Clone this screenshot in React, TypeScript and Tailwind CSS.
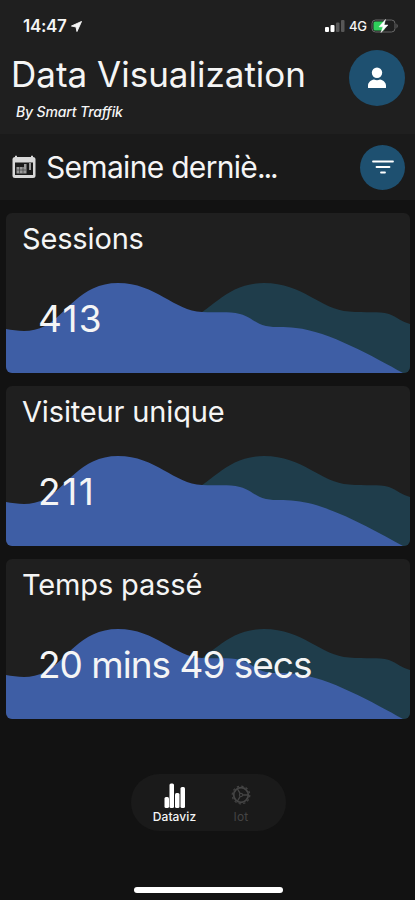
const stats = [
    { title: 'Sessions', value: '413', tracking: 'tracking-[1.2px]' },
    { title: 'Visiteur unique', value: '211', tracking: 'tracking-[1.6px]' },
    { title: 'Temps passé', value: '20 mins 49 secs', tracking: 'tracking-[-1px]' },
];

function Waves() {
    return (
        <svg viewBox="0 0 404 160" preserveAspectRatio="none" className="absolute inset-0 w-full h-full">
            <path fill="#1f3d4b" d="M180 108C206 98 220 70 258 70C297 70 315 97 343 98.500C360 100 372 98 383 101C391 104 396 109 404 111V160H180Z" />
            <path fill="#3e5ea5" d="M0 116C12 118 26 120 39 113C60 102 74 70 112 70C150 70 168 98 196 99C210 100 222 98 234 101C246 104 249 111 260 113C270 115 277 113 290 115C322 118 368 144 397 160H0Z" />
        </svg>
    );
}

function StatCard({ title, value, tracking }: { title: string; value: string; tracking: string }) {
    return (
        <article className="relative h-[160px] rounded-md overflow-hidden bg-[#1f1f1f]">
            <Waves />
            <div className="relative flex flex-col">
                <h2 className="pl-4 pt-2 text-[29px] leading-9 tracking-[-0.15px]">{title}</h2>
                <p className={`pl-[32px] pt-[38px] text-[37px] leading-[48px] ${tracking}`}>{value}</p>
            </div>
        </article>
    );
}

function StatusBar() {
    return (
        <div className="h-[50px] flex items-start justify-between pl-[23px] pr-4">
            <div className="flex items-center gap-1 pt-[15px]">
                <span className="text-[17px] leading-[22px] font-semibold tracking-[-0.3px]">14:47</span>
                <svg viewBox="0 0 12 12" className="size-[11px]" fill="currentColor">
                    <path d="M11.500 0.500L0.500 5.500L5.500 6.500L6.500 11.500Z" stroke="currentColor" strokeLinejoin="round" />
                </svg>
            </div>
            <div className="flex items-center pt-[15px]">
                <svg viewBox="0 0 20 12" className="w-5 h-3" fill="white">
                    <rect x="0" y="7" width="4" height="5" rx="1" />
                    <rect x="5.500" y="5" width="4" height="7" rx="1" />
                    <rect x="11" y="2.500" width="3.500" height="9.500" rx="1" opacity="0.250" />
                    <rect x="16" y="0" width="3.500" height="12" rx="1" opacity="0.250" />
                </svg>
                <span className="ml-1 text-[13px] leading-[22px] font-medium tracking-[-0.1px]">4G</span>
                <svg viewBox="0 0 28 14" className="ml-1 w-7 h-3.5">
                    <rect x="1" y="1" width="23" height="12" rx="3.500" fill="none" stroke="#686868" />
                    <rect x="2.500" y="2.500" width="11" height="9" rx="1.500" fill="#2fd05b" />
                    <path d="M25.500 4.500Q28 7 25.500 9.500Z" fill="#686868" />
                    <path d="M14.500 0.500L8 7.800H12L10 13.500L17 6H13Z" fill="white" stroke="white" strokeWidth="0.500" />
                </svg>
            </div>
        </div>
    );
}

export default function App() {
    return (
        <main className="w-full h-[900px] flex flex-col bg-[#121212] text-[#f5f5f5] font-['Inter','Liberation_Sans',sans-serif] overflow-hidden">
            <header className="h-[134px] bg-[#1f1f1f]">
                <StatusBar />
                <div className="flex justify-between pl-[11px] pr-[10px]">
                    <div>
                        <h1 className="text-[35px] leading-[48px] whitespace-nowrap">Data Visualization</h1>
                        <p className="pl-[5px] pt-1 text-[14px] leading-5 italic font-medium tracking-[-0.15px]">By Smart Traffik</p>
                    </div>
                    <button className="size-14 rounded-full bg-[#1e5070] flex items-center justify-center">
                        <svg viewBox="0 0 20 22" className="w-5 h-[22px]" fill="white">
                            <circle cx="10" cy="5.800" r="5.200" />
                            <path d="M1 20.500V18.500C1 15.500 4 13 7 12.500Q10 14 13 12.500C16 13 19 15.500 19 18.500V20.500Q19 21 18.500 21H1.500Q1 21 1 20.500Z" />
                        </svg>
                    </button>
                </div>
            </header>
            {/* period */}
            <div className="h-[66px] shrink-0 flex items-center pl-3 pr-[10px] bg-[#1a1a1a]">
                <svg viewBox="0 0 24 24" className="size-6">
                    <rect x="0.500" y="2" width="23" height="21" rx="2.500" fill="#d8d8d8" />
                    <path d="M4 0.800V3M20 0.800V3" stroke="#d8d8d8" strokeWidth="2" />
                    <rect x="3" y="7.500" width="18" height="12.500" fill="#1a1a1a" />
                    <path d="M4.500 12H12V18.500H4.500ZM12 9H14.500V18.500H12ZM17 8H19V15H17Z" fill="#999" />
                    <path d="M4.500 15H14M7.500 12V18.500M11 12V18.500" stroke="#444" strokeWidth="0.700" />
                </svg>
                <p className="ml-[10px] text-[30px] leading-10 tracking-[-0.7px] whitespace-nowrap">Semaine derniè<span className="tracking-[-2.2px]">...</span></p>
                <button className="ml-auto size-[45px] rounded-full bg-[#1e5070] flex items-center justify-center">
                    <svg viewBox="0 0 22 14" className="w-[22px] h-3.5" stroke="white" strokeWidth="1.800" strokeLinecap="round">
                        <path d="M1 1.500H21M4.500 7H17.500M9 12.500H13" />
                    </svg>
                </button>
            </div>
            <section className="flex flex-col gap-[13px] pl-[6px] pr-[5px] pt-[13px]">
                {stats.map((stat) => (
                    <StatCard key={stat.title} title={stat.title} value={stat.value} tracking={stat.tracking} />
                ))}
            </section>
            <nav className="mt-auto w-[155px] h-[57px] shrink-0 ml-[131px] rounded-full bg-[#1a1a1a] flex pl-[15px] pt-[9px]">
                <button className="w-[57px] flex flex-col items-center">
                    <svg viewBox="0 0 22 26" className="w-[22px] h-[26px]" fill="white">
                        <rect x="0.500" y="14" width="4.500" height="11" rx="1.500" />
                        <rect x="5.500" y="0.500" width="4.500" height="24.500" rx="1.500" />
                        <rect x="11" y="10" width="4.500" height="15" rx="1.500" />
                        <rect x="16.500" y="4" width="4.500" height="21" rx="1.500" />
                    </svg>
                    <span className="text-[12px] leading-4 font-medium tracking-[0.1px]">Dataviz</span>
                </button>
                <button className="ml-[22px] w-8 flex flex-col items-center text-[#444]">
                    <svg viewBox="0 0 20 26" className="w-5 h-[26px]" fill="none" stroke="currentColor">
                        <circle cx="10" cy="12" r="7.300" strokeWidth="1.800" />
                        <circle cx="10" cy="12" r="8.800" strokeWidth="1.200" strokeDasharray="2.304 2.304" />
                        <circle cx="10" cy="12" r="1.600" strokeWidth="1.100" />
                        <path d="M11.500 12H17.500M9.200 10.600L6.200 5.500M9.200 13.400L6.200 18.500" strokeWidth="1.300" />
                    </svg>
                    <span className="text-[12px] leading-4 tracking-[0.2px]">Iot</span>
                </button>
            </nav>
            <div className="mt-[56px] mb-[7px] ml-[134px] w-[149px] h-[6px] shrink-0 rounded-full bg-white" />
        </main>
    );
}
